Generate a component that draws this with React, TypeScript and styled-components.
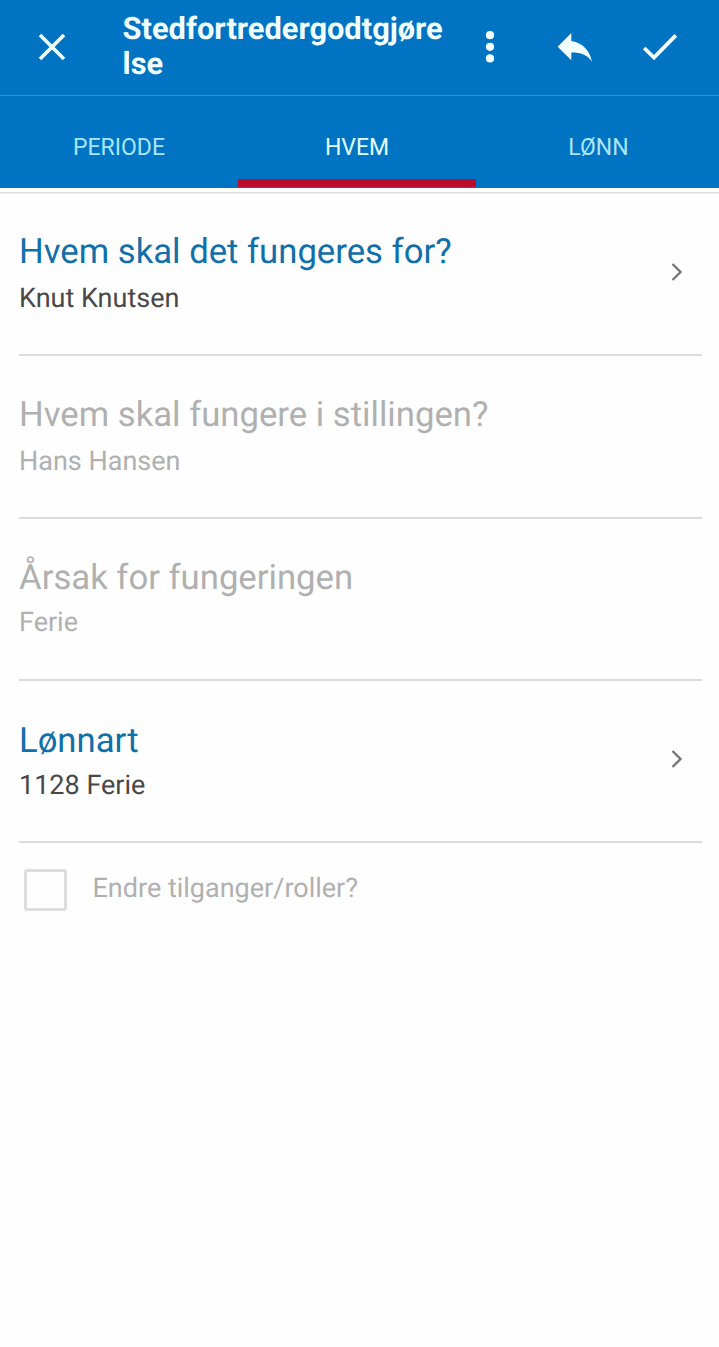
import React from 'react';
import styled, { createGlobalStyle } from 'styled-components';

const GlobalStyle = createGlobalStyle`
  * { box-sizing: border-box; }
  body {
    margin: 0;
    background: #fefefe;
    font-family: Roboto, "Liberation Sans", sans-serif;
    text-rendering: geometricPrecision;
  }
`;

const Screen = styled.div`
  display: flex;
  flex-direction: column;
  min-height: 100vh;
  background: #fefefe;
`;

const Toolbar = styled.header`
  display: flex;
  height: 96px;
  background: #0073c2;
  border-bottom: 1px solid #3592d0;
`;

const IconButton = styled.button<{ $width: number }>`
  display: flex;
  align-items: center;
  justify-content: center;
  width: ${(p) => p.$width}px;
  height: 94px;
  padding: 0;
  border: 0;
  background: none;
  color: #f2ffff;
  flex: none;
`;

const Title = styled.h1`
  width: 325px;
  margin: 0 0 0 18.6px;
  padding-top: 11px;
  color: #f2ffff;
  font-size: 30.8px;
  font-weight: 700;
  line-height: 35px;
  word-break: break-all;
`;

const Tabs = styled.nav`
  display: flex;
  height: 92px;
  background: #0073c2;
`;

const Tab = styled.button<{ $active?: boolean }>`
  width: 238px;
  padding: 20px 0 0;
  border: 0;
  border-bottom: 9px solid transparent;
  background: ${(p) =>
    p.$active ? 'linear-gradient(#b90c2f, #b90c2f) 0 83px / 100% 8px no-repeat border-box' : 'none'};
  color: ${(p) => (p.$active ? '#e2ffff' : '#a9e6fb')};
  font: 400 23px Roboto, sans-serif;

  &:last-child {
    flex: 1;
    padding-left: 2px;
  }
`;

const TopRule = styled.div`
  height: 6px;
  border-top: 4px solid #fefefe;
  border-bottom: 1px solid #efefef;
  background: #dcdcdc;
`;

const Row = styled.section<{ $height: number; $top: number }>`
  display: flex;
  justify-content: space-between;
  height: ${(p) => p.$height}px;
  margin: 0 17px 0 19px;
  padding-top: ${(p) => p.$top}px;
  border-bottom: 2px solid #dbdbdb;
`;

const Heading = styled.h2<{ $disabled?: boolean }>`
  margin: 0;
  color: ${(p) => (p.$disabled ? '#b0b0b0' : '#116fa9')};
  font-size: 34.7px;
  font-weight: 400;
  line-height: 40px;
`;

const Value = styled.p<{ $disabled?: boolean; $gap: number }>`
  margin: ${(p) => p.$gap}px 0 0;
  color: ${(p) => (p.$disabled ? '#b0b0b0' : '#484848')};
  font-size: 27px;
  line-height: 32px;
`;

const Chevron = styled.svg<{ $top: number }>`
  margin: ${(p) => p.$top}px 18px 0 0;
  flex: none;
`;

const CheckRow = styled.label`
  display: flex;
  align-items: flex-start;
  padding: 26px 0 0 24px;
`;

const Box = styled.span`
  width: 43px;
  height: 42px;
  border: 3px solid #dddddd;
  border-radius: 3px;
`;

const CheckLabel = styled.span`
  margin: 3px 0 0 25.5px;
  color: #b0b0b0;
  font-size: 27px;
  line-height: 32px;
`;

type Field = { title: string; value: string; disabled?: boolean; height: number; top: number; gap: number };

const fields: Field[] = [
  { title: 'Hvem skal det fungeres for?', value: 'Knut Knutsen', height: 162, top: 38, gap: 10 },
  { title: 'Hvem skal fungere i stillingen?', value: 'Hans Hansen', disabled: true, height: 163, top: 39, gap: 10 },
  { title: 'Årsak for fungeringen', value: 'Ferie', disabled: true, height: 162, top: 39, gap: 8 },
  { title: 'Lønnart', value: '1128 Ferie', height: 162, top: 40, gap: 8 },
];

export default function App() {
  return (
    <Screen>
      <GlobalStyle />
      <Toolbar>
        <IconButton $width={104} aria-label="Lukk">
          <svg width="28" height="28" viewBox="0 0 28 28" fill="none" stroke="currentColor" strokeWidth="3.6">
            <path d="M2 2 26 26M26 2 2 26" />
          </svg>
        </IconButton>
        <Title>Stedfortredergodtgjørelse</Title>
        <IconButton $width={85} aria-label="Meny">
          <svg width="10" height="32" viewBox="0 0 10 32" fill="currentColor">
            <circle cx="5" cy="4.2" r="4.1" />
            <circle cx="5" cy="15.8" r="4.1" />
            <circle cx="5" cy="27.4" r="4.1" />
          </svg>
        </IconButton>
        <IconButton $width={85} aria-label="Angre">
          <svg width="36" height="30" viewBox="0 0 36 30" fill="currentColor">
            <path d="M14.3 1 .7 14.7l13.6 13.6v-7.8c9-.1 16.1 2.2 20.7 9.2-2-10-8-18.6-20.7-20.7z" />
          </svg>
        </IconButton>
        <IconButton $width={85} aria-label="Lagre">
          <svg width="36" height="28" viewBox="0 0 36 28" fill="none" stroke="currentColor" strokeWidth="3.8">
            <path d="M2.2 15 12 24.5 33.8 2.4" />
          </svg>
        </IconButton>
      </Toolbar>
      <Tabs>
        <Tab>PERIODE</Tab>
        <Tab $active>HVEM</Tab>
        <Tab>LØNN</Tab>
      </Tabs>
      <TopRule />
      {fields.map((f) => (
        <Row key={f.title} $height={f.height} $top={f.top}>
          <div>
            <Heading $disabled={f.disabled}>{f.title}</Heading>
            <Value $disabled={f.disabled} $gap={f.gap}>{f.value}</Value>
          </div>
          {!f.disabled && (
            <Chevron $top={68 - f.top} width="14" height="20" viewBox="0 0 14 20" fill="none" stroke="#777" strokeWidth="2.4">
              <path d="M2.5 2 10.5 10 2.5 18" />
            </Chevron>
          )}
        </Row>
      ))}
      <CheckRow>
        <Box />
        <CheckLabel>Endre tilganger/roller?</CheckLabel>
      </CheckRow>
    </Screen>
  );
}
